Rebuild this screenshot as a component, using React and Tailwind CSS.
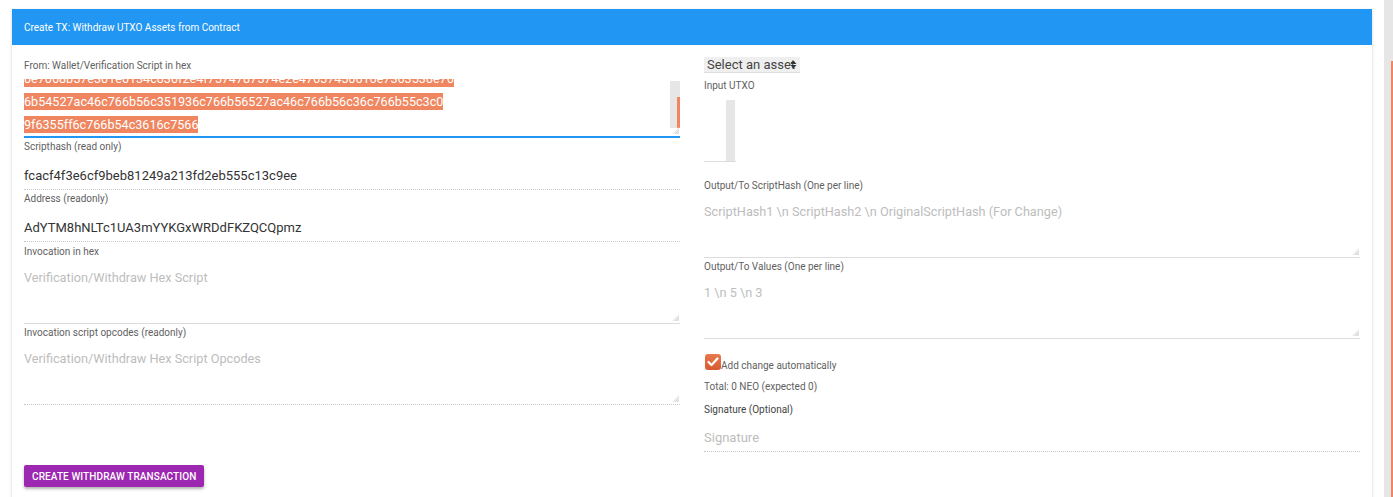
import React from "react";

const hexLines = [
  "0e7068b57e301e0134c030f2e4f7574787574e2e47657456616e7363536e76",
  "6b54527ac46c766b56c351936c766b56527ac46c766b56c36c766b55c3c0",
  "9f6355ff6c766b54c3616c7566",
];

const Label = ({ children, className = "" }) => (
  <div className={`pt-[2px] pb-[1px] text-[10px] leading-[14px] text-[#5f5f5f] whitespace-nowrap ${className}`}>
    {children}
  </div>
);

const ResizeGrip = () => (
  <svg width="9" height="9" viewBox="0 0 9 9" className="absolute right-0 bottom-[1px]">
    <path d="M8 1 L8 8 L1 8 Z" fill="#ececec" />
    <path d="M8 4 L4 8 M8 6 L6 8" stroke="#d6d6d6" strokeWidth="1" />
  </svg>
);

const ReadOnlyInput = ({ value, placeholder }) => (
  <div className="pt-[13px] pb-[5px] border-b border-dotted border-[#c8c8c8] text-[13px] leading-[16px] whitespace-nowrap">
    {value ? (
      <span className="text-[#333333]">{value}</span>
    ) : (
      <span className="text-[#bdbdbd]">{placeholder}</span>
    )}
  </div>
);

const TextArea = ({ placeholder, dotted }) => (
  <div
    className={`relative h-[64px] pt-[10px] border-b text-[12.7px] leading-[16px] text-[#bdbdbd] whitespace-nowrap ${
      dotted ? "border-dotted border-[#c8c8c8]" : "border-solid border-[#dcdcdc]"
    }`}
  >
    {placeholder}
    <ResizeGrip />
  </div>
);

export default function App() {
  return (
    <div className="flex h-[497px] w-full overflow-hidden bg-white font-['Roboto','Liberation_Sans',sans-serif]">
      <div className="flex-1 pl-[12px] pr-[12px] pt-[9px]">
        <div className="h-[520px] bg-white shadow-[0_1px_3px_rgba(0,0,0,0.18)]">
          <div className="h-[36px] bg-[#2196f3] px-[12px] flex items-center text-[10px] text-white">
            Create TX: Withdraw UTXO Assets from Contract
          </div>
          <div className="grid grid-cols-2 gap-x-[24px] px-[12px] pt-[12px]">
            {/* left column */}
            <div>
              <Label>From: Wallet/Verification Script in hex</Label>
              <div className="relative h-[59px] overflow-hidden border-b-2 border-[#2196f3] mt-[5px]">
                <div className="mt-[-12px] pr-[14px] text-[12.6px] leading-[23px] text-white whitespace-nowrap">
                  {hexLines.map((line) => (
                    <div key={line}>
                      <span className="bg-[#ef8660] py-[1px]">{line}</span>
                    </div>
                  ))}
                </div>
                <div className="absolute right-0 top-[2px] w-[10px] h-[47px] bg-[#e6e6e6]">
                  <div className="absolute right-0 top-[16px] w-[3px] h-[31px] bg-[#ef8660]" />
                </div>
                <ResizeGrip />
              </div>
              <Label>Scripthash (read only)</Label>
              <ReadOnlyInput value="fcacf4f3e6cf9beb81249a213fd2eb555c13c9ee" />
              <Label>Address (readonly)</Label>
              <ReadOnlyInput value="AdYTM8hNLTc1UA3mYYKGxWRDdFKZQCQpmz" />
              <Label className="pt-[3px]">Invocation in hex</Label>
              <TextArea placeholder="Verification/Withdraw Hex Script" />
              <Label>Invocation script opcodes (readonly)</Label>
              <TextArea placeholder="Verification/Withdraw Hex Script Opcodes" dotted />
              <button className="mt-[60px] h-[22px] px-[8px] rounded-[2px] bg-[#9c27b0] text-[10px] font-medium tracking-[0.1px] text-white uppercase shadow-[0_2px_3px_rgba(0,0,0,0.3)]">
                Create Withdraw Transaction
              </button>
            </div>

            {/* right column */}
            <div>
              <div className="relative w-[96px] h-[16px] bg-[#efefef] border-b border-[#dddddd] pl-[3px] text-[13px] leading-[16px] text-[#444444] whitespace-nowrap overflow-hidden">
                Select an asset
                <svg width="7" height="9" viewBox="0 0 7 9" className="absolute right-[3px] top-[3px]">
                  <path d="M3.5 0.5 L6.5 4 L0.5 4 Z" fill="#333" />
                  <path d="M0.5 5 L6.5 5 L3.5 8.5 Z" fill="#333" />
                </svg>
              </div>
              <Label className="mt-[4px]">Input UTXO</Label>
              <div className="relative mt-[6px] w-[32px] h-[62px] border-b border-[#dddddd]">
                <div className="absolute right-[1px] top-0 w-[9px] h-[61px] bg-[#e6e6e6]" />
              </div>
              <Label className="mt-[15px]">Output/To ScriptHash (One per line)</Label>
              <TextArea placeholder="ScriptHash1 \n ScriptHash2 \n OriginalScriptHash (For Change)" />
              <Label className="pt-[1px]">Output/To Values (One per line)</Label>
              <TextArea placeholder="1 \n 5 \n 3" />
              <div className="mt-[15px] flex items-end">
                <div className="ml-[1px] w-[16px] h-[16px] rounded-[3px] bg-gradient-to-b from-[#e7794c] to-[#d65a30] flex items-center justify-center">
                  <svg width="12" height="10" viewBox="0 0 12 10">
                    <path d="M1.5 5 L4.5 8 L10.5 1.5" stroke="white" strokeWidth="2.2" fill="none" strokeLinecap="round" strokeLinejoin="round" />
                  </svg>
                </div>
                <span className="text-[10px] leading-[12px] text-[#5f5f5f] mb-[-2px]">Add change automatically</span>
              </div>
              <div className="mt-[10px] text-[10px] leading-[14px] text-[#5f5f5f]">Total: 0 NEO (expected 0)</div>
              <div className="mt-[9px] text-[10px] leading-[14px] text-[#444444]">Signature (Optional)</div>
              <div className="pt-[13px] pb-[5px] border-b border-dotted border-[#c8c8c8] text-[13px] leading-[16px] text-[#bdbdbd]">
                Signature
              </div>
            </div>
          </div>
        </div>
      </div>
      {/* page scrollbar */}
      <div className="relative w-[9px] h-full bg-[#e6e6e6]">
        <div className="absolute right-0 top-[61px] w-[2px] h-[436px] bg-[#ef8660]" />
      </div>
    </div>
  );
}
